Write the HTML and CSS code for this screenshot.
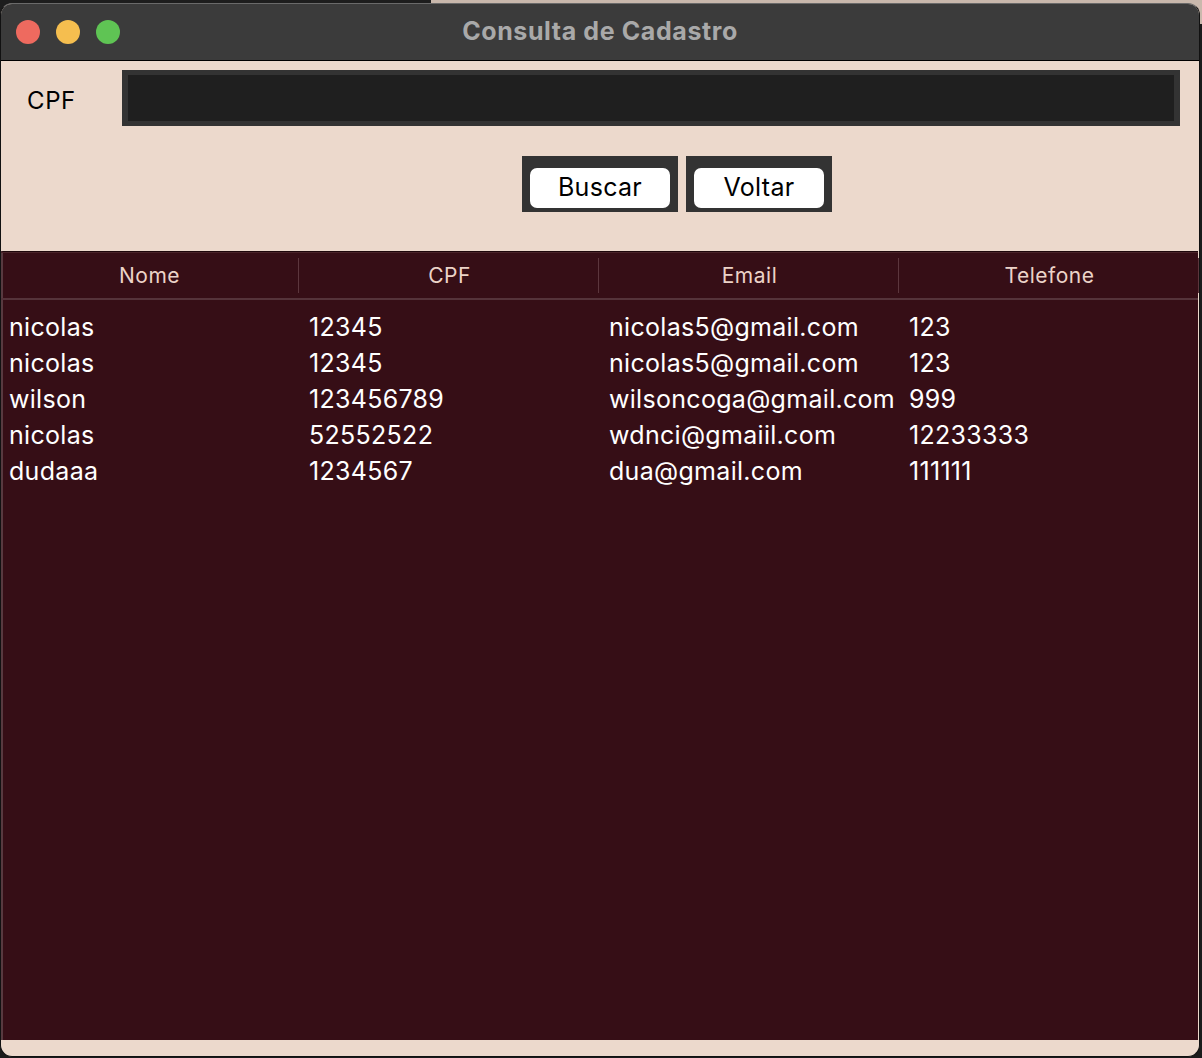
FILE: index.html
```html
<!DOCTYPE html>
<html lang="pt">
<head>
<meta charset="utf-8">
<title>Consulta de Cadastro</title>
<link rel="stylesheet" href="styles.css">
</head>
<body>
<div class="window">
  <div class="titlebar">
    <div class="lights">
      <span class="light red"></span>
      <span class="light yellow"></span>
      <span class="light green"></span>
    </div>
    <div class="title">Consulta de Cadastro</div>
  </div>
  <div class="form">
    <div class="field-row">
      <label class="label" for="cpf">CPF</label>
      <div class="input-frame"><input id="cpf" class="input" type="text"></div>
    </div>
    <div class="button-row">
      <div class="btn-frame btn-frame-buscar"><button class="btn">Buscar</button></div>
      <div class="btn-frame btn-frame-voltar"><button class="btn">Voltar</button></div>
    </div>
  </div>
  <div class="table">
    <div class="thead">
      <div class="th">Nome</div>
      <div class="th">CPF</div>
      <div class="th">Email</div>
      <div class="th">Telefone</div>
    </div>
    <div class="tbody">
      <div class="tr"><div class="td">nicolas</div><div class="td">12345</div><div class="td">nicolas5@gmail.com</div><div class="td">123</div></div>
      <div class="tr"><div class="td">nicolas</div><div class="td">12345</div><div class="td">nicolas5@gmail.com</div><div class="td">123</div></div>
      <div class="tr"><div class="td">wilson</div><div class="td">123456789</div><div class="td">wilsoncoga@gmail.com</div><div class="td">999</div></div>
      <div class="tr"><div class="td">nicolas</div><div class="td">52552522</div><div class="td">wdnci@gmaiil.com</div><div class="td">12233333</div></div>
      <div class="tr"><div class="td">dudaaa</div><div class="td">1234567</div><div class="td">dua@gmail.com</div><div class="td">111111</div></div>
    </div>
  </div>
</div>
</body>
</html>
```

FILE: styles.css
```css
* { box-sizing: border-box; }

html, body {
  margin: 0;
  padding: 0;
  height: 100%;
}

body {
  background:
    linear-gradient(to right, #1d1d1d 431px, #c9b8ac 431px) top left / 100% 24px no-repeat,
    #1b1b1b;
  font-family: Inter, "Liberation Sans", sans-serif;
  overflow: hidden;
}

.window {
  margin-top: 3px;
  width: 1200px;
  height: 1054px;
  border-radius: 12px;
  overflow: hidden;
  background: #ecd9cc;
  display: flex;
  flex-direction: column;
  border: 1px solid #111;
  border-top-color: #6a6a6a;
}

.titlebar {
  height: 57px;
  flex: none;
  background: #3b3b3b;
  border-bottom: 1px solid #000;
  display: flex;
  align-items: center;
  position: relative;
}

.lights {
  display: flex;
  gap: 16px;
  padding-left: 15px;
}

.light {
  width: 24px;
  height: 24px;
  border-radius: 50%;
  display: block;
}
.red { background: #ee6a5f; }
.yellow { background: #f5be4f; }
.green { background: #5fc454; }

.title {
  position: absolute;
  left: 0;
  right: 0;
  top: 0;
  bottom: 0;
  display: flex;
  align-items: center;
  justify-content: center;
  color: #a9a9a9;
  font-weight: 700;
  font-size: 25px;
  letter-spacing: 0.6px;
  padding-bottom: 2px;
  pointer-events: none;
}

.form {
  height: 190px;
  flex: none;
  padding-top: 9px;
}

.field-row {
  display: flex;
  align-items: center;
  padding-left: 26px;
  padding-right: 19px;
}

.label {
  width: 95px;
  font-size: 24px;
  letter-spacing: 0.6px;
  color: #000;
  padding-top: 4px;
}

.input-frame {
  flex: 1;
  height: 56px;
  background: #333333;
  padding: 5px 6px;
}

.input {
  display: block;
  width: 100%;
  height: 100%;
  border: 0;
  outline: 0;
  background: #1f1f1f;
  color: #fff;
  font: inherit;
}

.button-row {
  display: flex;
  gap: 8px;
  margin-top: 30px;
  padding-left: 521px;
}

.btn-frame {
  height: 56px;
  background: #333333;
  padding: 12px 8px 4px 8px;
}
.btn-frame-buscar { width: 156px; }
.btn-frame-voltar { width: 146px; }

.btn {
  display: block;
  width: 100%;
  height: 40px;
  border: 0;
  border-radius: 7px;
  background: #fff;
  color: #000;
  font-family: Inter, "Liberation Sans", sans-serif;
  font-size: 25px;
  letter-spacing: 0.3px;
  padding: 0 0 2px 0;
}

.table {
  flex: 1;
  background: #360e16;
  border-top: 1px solid #1e070b;
  border-left: 2px solid #583a40;
  margin-right: 1px;
  display: flex;
  flex-direction: column;
}

.thead {
  display: grid;
  grid-template-columns: repeat(4, 300px);
  height: 48px;
  align-items: center;
  border-top: 1px solid #4a2329;
  border-bottom: 2px solid #55333a;
  margin-left: -2px;
}

.th {
  height: 35px;
  margin-right: 2px;
  border-right: 1px solid #5c363d;
  display: flex;
  align-items: center;
  justify-content: center;
  color: #ecd3c8;
  font-size: 21px;
  letter-spacing: 0.5px;
  padding-bottom: 1px;
}

.tbody {
  padding-top: 9px;
  margin-left: -2px;
}

.tr {
  display: grid;
  grid-template-columns: repeat(4, 300px);
  height: 36px;
  align-items: center;
}

.td {
  padding-left: 8px;
  color: #ffffff;
  font-size: 25px;
  letter-spacing: 0.3px;
  white-space: nowrap;
}

.window::after {
  content: "";
  display: block;
  height: 16px;
  flex: none;
}
```
